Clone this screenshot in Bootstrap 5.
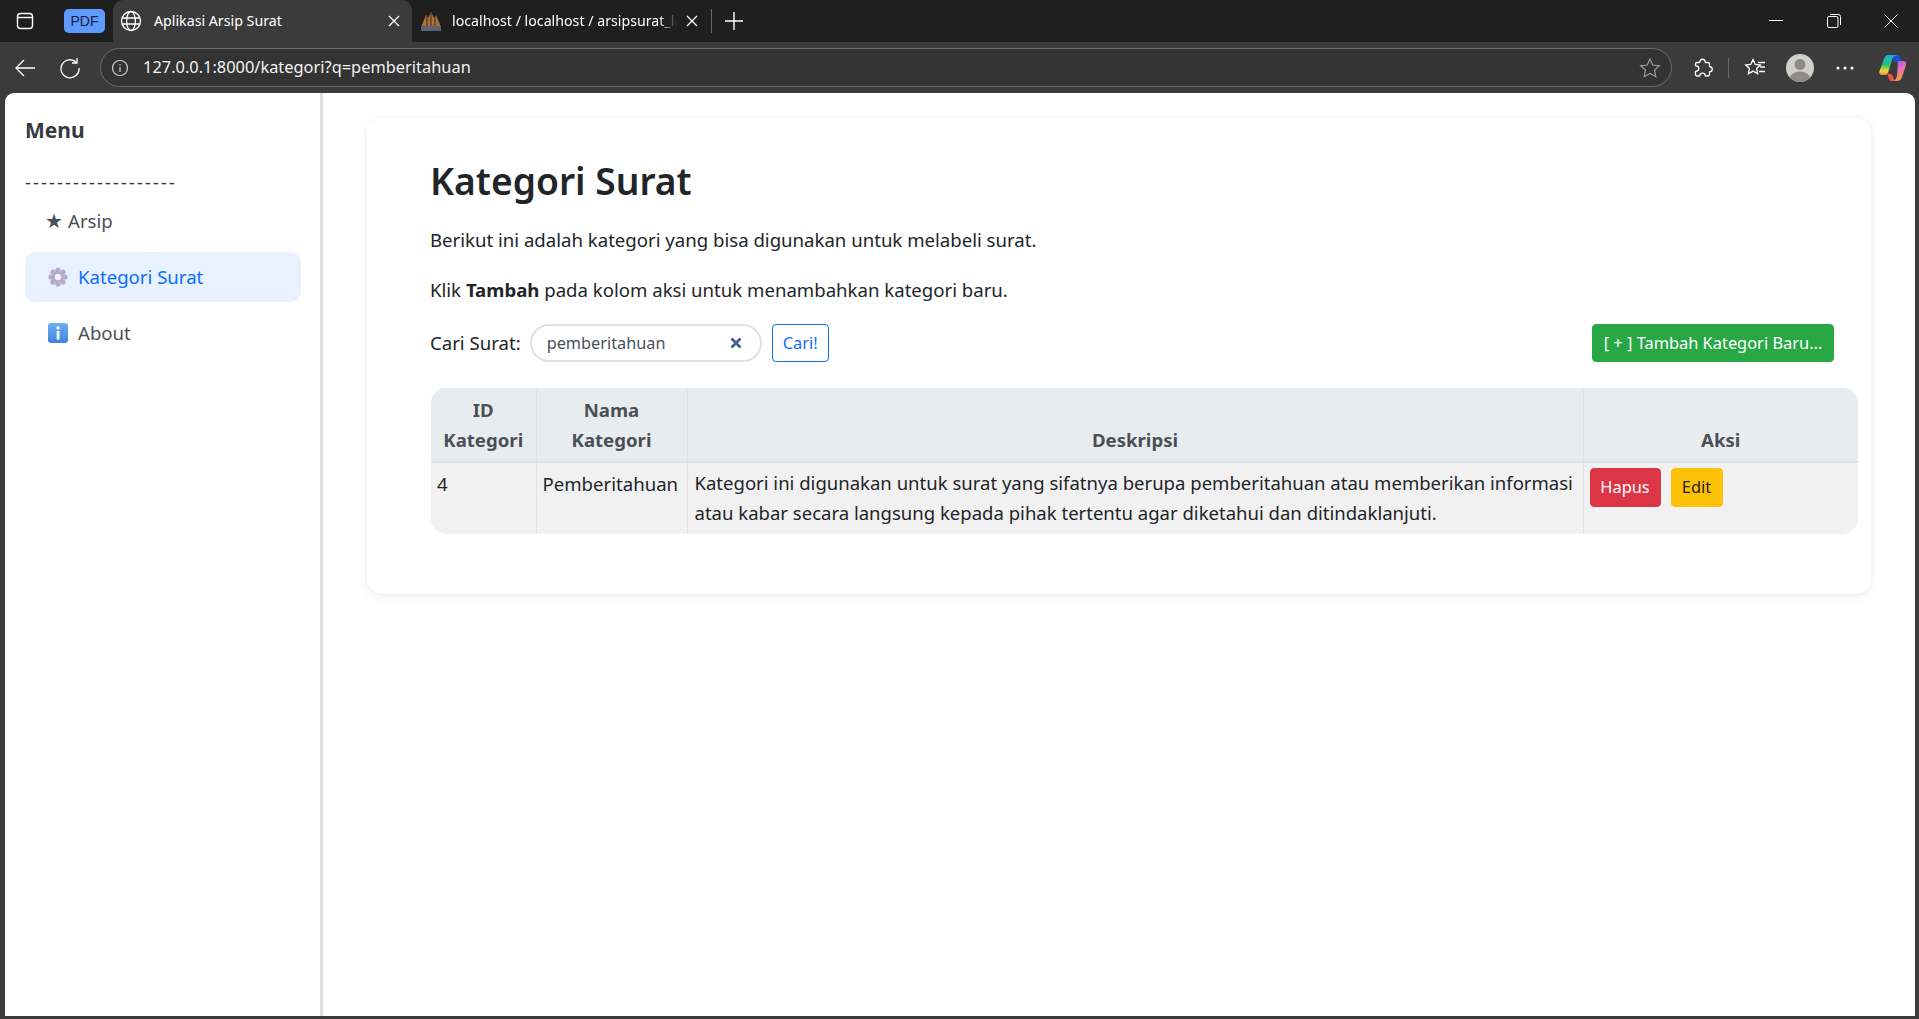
<!doctype html>
<html lang="id">
<head>
<meta charset="utf-8">
<title>Aplikasi Arsip Surat</title>
<link href="https://cdn.jsdelivr.net/npm/bootstrap@5.3.0/dist/css/bootstrap.min.css" rel="stylesheet">
<style>
html,body{height:100%;overflow:hidden}
body{background:#3b3b3b;font-family:"Noto Sans",sans-serif;font-size:18.6px;color:#212529}
.app-frame{height:1019px}
.tabstrip{height:42px;background:#1f1f1f;color:#fff;flex:none}
.toolbar{height:51px;background:#3b3b3b;color:#fff;flex:none}
.sq-btn{flex:none;display:flex;align-items:center;justify-content:center}
.side-toggle{width:24px;margin-left:13px}
.pdf-chip{width:41px;height:24px;margin:0 8px 0 27px;background:#5f9bff;color:#14233f;font-size:14px;border-radius:5px;font-family:"Liberation Sans",sans-serif}
.tab-active{width:299px;height:42px;background:#3b3b3b;border-radius:10px 10px 0 0;padding:0 11px 0 7px;font-size:14.2px}
.tab-idle{width:291px;padding:0 4px 0 8px;font-size:14.2px}
.tab-label{white-space:nowrap;overflow:hidden;flex:1 1 auto;min-width:0}
.tab-idle .tab-label{-webkit-mask-image:linear-gradient(90deg,#000 92%,transparent);padding-left:2px}
.tab-sep{width:1px;height:24px;background:#666;flex:none;margin:0 12px 0 8px}
.win-ctrl{width:58px;height:42px}
.win-last{width:56px}
.addr{height:39px;margin:0 19px 0 13px;width:1572px;flex:none;border:1px solid #6d6d6d;border-radius:20px;padding:0 10px 0 10px;background:#333;font-size:16.4px}
.addr-url{color:#f2f2f2;flex:1 1 auto;padding-left:14px}
.tool-sep{width:1px;height:20px;background:#666;flex:none;margin:0 15px 0 13px}
.viewport{background:#fff;flex:1 1 auto;margin:0 4px 3px 5px;border-radius:9px 9px 0 0;overflow:hidden;min-height:0}
.side-panel{width:318px;flex:none;border-right:3px solid #dee2e6;padding:21px 19px 0 20px}
.menu-title{font-size:21px;font-weight:700;color:#343a40;line-height:32px;margin:0}
.menu-dash{font-size:18.6px;line-height:28px;margin:22px 0 0;color:#343a40;letter-spacing:2px;white-space:nowrap}
.side-link{display:flex;align-items:center;height:50px;padding:0 0 0 20px;color:#495057;text-decoration:none;border-radius:10px;margin-bottom:6px}
.side-link.is-on{background:#e7f1ff;color:#0d6efd}
.side-star{margin-right:5px;font-size:20px}
.side-emoji{margin:0 10px 0 3px;flex:none}
.main-area{flex:1 1 auto;padding:25px 44px 0 44px;min-width:0}
.sheet{background:#fff;border-radius:15px;box-shadow:0 2px 10px rgba(0,0,0,.09);padding:39px 13px 59px 63px;height:476px}
.sheet-title{font-size:37.2px;font-weight:600;line-height:47px;margin:0 0 21px;color:#212529}
.sheet-text{line-height:30px;margin:0 0 20px}
.tools-row{height:38px;margin:-1px 24px 26px 0}
.search-pill{width:232px;height:38px;margin-left:9px;border:2px solid #dee2e6;border-radius:19px;padding:0 18px 0 15px;color:#495057;font-size:16.3px}
.btn-find{height:38px;width:57px;margin-left:10px;padding:0;font-size:16.4px;border-radius:4px;color:#0d6efd;border-color:#0d6efd}
.btn-add{height:38px;width:242px;padding:0;font-size:16.4px;border-radius:4px;background:#28a745;border-color:#28a745;white-space:nowrap}
.table-shell{border-radius:15px;overflow:hidden;width:1427px;margin-left:1px}
.data-table{table-layout:fixed;width:1427px;margin:0;border-collapse:collapse}
.data-table th{background:#e9ecef;color:#495057;font-weight:700;text-align:center;vertical-align:bottom;line-height:30px;padding:0 4px 6px;border-right:1px solid #dee2e6;border-bottom:2px solid #dee2e6;height:74px}
.data-table td{background:#f1f1f1;color:#212529;vertical-align:top;line-height:30px;padding:6px 6px 3px;border-right:1px solid #dee2e6;border-bottom:0;height:72px}
.data-table th:last-child,.data-table td:last-child{border-right:0}
.data-table td.cell-desc{padding:5px 6px 5px 7px;font-size:18.55px}
.data-table td.cell-act{padding:5px 6px}
.btn-row{height:39px;padding:0;font-size:16.4px;border-radius:4px}
.btn-del{width:71px;background:#dc3545;border-color:#dc3545;color:#fff}
.btn-edit{width:52px;margin-left:10px;background:#ffc107;border-color:#ffc107;color:#212529}
</style>
</head>
<body>
<div class="app-frame d-flex flex-column">
  <div class="tabstrip d-flex align-items-center">
    <div class="sq-btn side-toggle"><svg width="20" height="20" viewBox="0 0 20 20" fill="none" stroke="#fff" stroke-width="1.4"><rect x="2.500" y="2.500" width="15" height="15" rx="3"/><path d="M2.500 6.500h15"/></svg></div>
    <div class="sq-btn pdf-chip">PDF</div>
    <div class="tab-active d-flex align-items-center flex-none">
      <svg class="flex-shrink-0 me-2" width="22" height="22" viewBox="0 0 22 22" fill="none" stroke="#fff" stroke-width="1.3"><circle cx="11" cy="11" r="9.500"/><ellipse cx="11" cy="11" rx="4.400" ry="9.500"/><path d="M2 8h18M2 14h18"/></svg>
      <span class="tab-label ms-1">Aplikasi Arsip Surat</span>
      <svg class="flex-shrink-0" width="14" height="14" viewBox="0 0 14 14" stroke="#fff" stroke-width="1.3"><path d="M2 2l10 10M12 2L2 12"/></svg>
    </div>
    <div class="tab-idle d-flex align-items-center flex-none">
      <svg class="flex-shrink-0 me-2" width="22" height="22" viewBox="0 0 22 22"><path d="M1 17L6 5l2 3 3-6 3 6 2-3 5 12z" fill="#a87238"/><path d="M7 5v12M11 3v14M15 5v12" stroke="#3a2c1c" stroke-width="1"/><rect x="1" y="16" width="20" height="5" fill="#5b6270"/></svg>
      <span class="tab-label">localhost / localhost / arsipsurat_laravel</span>
      <svg class="flex-shrink-0 ms-2" width="14" height="14" viewBox="0 0 14 14" stroke="#fff" stroke-width="1.3"><path d="M2 2l10 10M12 2L2 12"/></svg>
    </div>
    <div class="tab-sep"></div>
    <div class="sq-btn"><svg width="20" height="20" viewBox="0 0 20 20" stroke="#fff" stroke-width="1.4"><path d="M10 1v18M1 10h18"/></svg></div>
    <div class="flex-grow-1"></div>
    <div class="sq-btn win-ctrl"><svg width="14" height="14" viewBox="0 0 14 14" stroke="#fff" stroke-width="1"><path d="M0 6.500h14"/></svg></div>
    <div class="sq-btn win-ctrl"><svg width="14" height="14" viewBox="0 0 14 14" fill="none" stroke="#fff" stroke-width="1"><rect x=".5" y="2.500" width="10.500" height="11" rx="1.500"/><path d="M3 .5h8.500a2 2 0 0 1 2 2V11"/></svg></div>
    <div class="sq-btn win-ctrl win-last"><svg width="14" height="14" viewBox="0 0 14 14" stroke="#fff" stroke-width="1"><path d="M.5.5l13 13M13.500 .5l-13 13"/></svg></div>
  </div>
  <div class="toolbar d-flex align-items-center">
    <div class="sq-btn ms-2" style="width:34px"><svg width="24" height="20" viewBox="0 0 24 20" fill="none" stroke="#fff" stroke-width="1.3"><path d="M22 10H3M11 2l-8 8 8 8"/></svg></div>
    <div class="sq-btn" style="width:34px;margin-left:11px"><svg width="22" height="22" viewBox="0 0 22 22" fill="none" stroke="#fff" stroke-width="1.3"><path d="M17.500 5.500A9 9 0 1 0 20 11"/><path d="M18 1v5h-5"/></svg></div>
    <div class="addr d-flex align-items-center">
      <svg class="flex-shrink-0" width="18" height="18" viewBox="0 0 18 18" fill="none" stroke="#d0d0d0" stroke-width="1.2"><circle cx="9" cy="9" r="7.500"/><path d="M9 8v5M9 5v1.400"/></svg>
      <span class="addr-url">127.0.0.1:8000/kategori?q=pemberitahuan</span>
      <svg class="flex-shrink-0" width="22" height="22" viewBox="0 0 22 22" fill="none" stroke="#9a9a9a" stroke-width="1.2"><path d="M11 2l2.800 6 6.500.8-4.800 4.400 1.300 6.500L11 16.400 5.200 19.700l1.300-6.500L1.700 8.800 8.200 8z"/></svg>
    </div>
    <div class="sq-btn" style="width:24px"><svg width="22" height="22" viewBox="0 0 22 22" fill="none" stroke="#fff" stroke-width="1.300"><path d="M8 4.500c0-3 5-3 5 0 0 .5.300 1 1 1h2a1.500 1.500 0 0 1 1.500 1.500v2c0 .7.500 1 1 1 2.300 0 2.300 4.500 0 4.500-.5 0-1 .3-1 1v2a1.500 1.500 0 0 1-1.500 1.500h-2c-.7 0-1-.5-1-1 0-2.600-5-2.600-5 0 0 .5-.3 1-1 1H5a1.500 1.500 0 0 1-1.500-1.500V15c0-.7.500-1 1-1 3 0 3-5 0-5-.5 0-1-.3-1-1V7A1.500 1.500 0 0 1 5 5.500h2c.7 0 1-.5 1-1z"/></svg></div>
    <div class="tool-sep"></div>
    <div class="sq-btn" style="width:22px"><svg width="22" height="22" viewBox="0 0 22 22" fill="none" stroke="#fff" stroke-width="1.300"><path d="M9 2.500l2.300 5 5 .6-3.700 3.400 1 5.200L9 14.100 4.400 16.700l1-5.200L1.700 8.100l5-.6z"/><path d="M14 5.500h7M16 10h5M15 14.500h6"/></svg></div>
    <div class="sq-btn" style="width:28px;margin-left:20px"><svg width="28" height="28" viewBox="0 0 28 28"><defs><clipPath id="av"><circle cx="14" cy="14" r="14"/></clipPath></defs><g clip-path="url(#av)"><rect width="28" height="28" fill="#d0cfca"/><circle cx="14" cy="10.500" r="5.500" fill="#8f8c87"/><ellipse cx="14" cy="25" rx="10.500" ry="7.500" fill="#8f8c87"/></g></svg></div>
    <div class="sq-btn" style="width:20px;margin-left:21px"><svg width="18" height="4" viewBox="0 0 18 4" fill="#fff"><circle cx="2" cy="2" r="1.500"/><circle cx="9" cy="2" r="1.500"/><circle cx="16" cy="2" r="1.500"/></svg></div>
    <div class="sq-btn" style="width:28px;margin-left:24px"><svg width="28" height="28" viewBox="0 0 28 28"><defs><linearGradient id="cp1" x1="0" y1="0" x2="0" y2="1"><stop offset="0" stop-color="#19a9f0"/><stop offset=".5" stop-color="#2cc36b"/><stop offset=".8" stop-color="#f6d23a"/><stop offset="1" stop-color="#f9893a"/></linearGradient><linearGradient id="cp2" x1="0" y1="0" x2=".4" y2="1"><stop offset="0" stop-color="#7d5cf0"/><stop offset=".5" stop-color="#e86ac8"/><stop offset="1" stop-color="#f79a3a"/></linearGradient></defs><path d="M14 1h4c2 0 3 1 3.500 3l1 4h-8z" fill="#1a4fd0"/><path d="M9 1H18Q14 2 13 6L9 19Q8 21 6 21H3Q-.5 21 .5 17L5 5Q6.500 1 9 1z" fill="url(#cp1)"/><path d="M8 19l2 6c.5 1.500 1.500 2 3 2h5c-2 0-3-1.500-3.500-3l-1-3z" fill="#f0543c"/><path d="M19 7h5c3 0 3.500 2 3 4l-4 12c-1 3-3 4-5 4h-5c3 0 4-2 5-5z" fill="url(#cp2)"/></svg></div>
  </div>
  <div class="viewport d-flex">
    <aside class="side-panel">
      <h5 class="menu-title">Menu</h5>
      <p class="menu-dash">-------------------</p>
      <a class="side-link" href="#"><span class="side-star">★</span>Arsip</a>
      <a class="side-link is-on" href="#"><svg class="side-emoji" width="20" height="20" viewBox="0 0 20 20"><g fill="#b7a9c9"><circle cx="10" cy="3" r="2.600"/><circle cx="10" cy="17" r="2.600"/><circle cx="3" cy="10" r="2.600"/><circle cx="17" cy="10" r="2.600"/><circle cx="5" cy="5" r="2.600"/><circle cx="15" cy="5" r="2.600"/><circle cx="5" cy="15" r="2.600"/><circle cx="15" cy="15" r="2.600"/><circle cx="10" cy="10" r="6"/></g><circle cx="10" cy="10" r="3.300" fill="#f1eef2"/></svg>Kategori Surat</a>
      <a class="side-link" href="#"><svg class="side-emoji" width="20" height="20" viewBox="0 0 20 20"><defs><linearGradient id="inf" x1="0" y1="0" x2="0" y2="1"><stop offset="0" stop-color="#6bb0f2"/><stop offset="1" stop-color="#3f83dc"/></linearGradient></defs><rect width="20" height="20" rx="3" fill="url(#inf)"/><rect x="8.700" y="8" width="2.800" height="8.500" fill="#fff"/><circle cx="10" cy="5" r="1.700" fill="#fff"/></svg>About</a>
    </aside>
    <main class="main-area">
      <div class="sheet">
        <h2 class="sheet-title">Kategori Surat</h2>
        <p class="sheet-text">Berikut ini adalah kategori yang bisa digunakan untuk melabeli surat.</p>
        <p class="sheet-text">Klik <strong>Tambah</strong> pada kolom aksi untuk menambahkan kategori baru.</p>
        <div class="tools-row d-flex align-items-center">
          <span>Cari Surat:</span>
          <div class="search-pill d-flex align-items-center justify-content-between">
            <span>pemberitahuan</span>
            <svg width="12" height="12" viewBox="0 0 12 12" stroke="#3b5a8f" stroke-width="2.600"><path d="M1.500 1.500l9 9M10.500 1.500l-9 9"/></svg>
          </div>
          <button class="btn btn-outline-primary btn-find" type="button">Cari!</button>
          <button class="btn btn-success btn-add ms-auto" type="button">[ + ] Tambah Kategori Baru...</button>
        </div>
        <div class="table-shell">
          <table class="table data-table">
            <colgroup><col style="width:105px"><col style="width:151px"><col style="width:896px"><col style="width:275px"></colgroup>
            <thead><tr><th>ID<br>Kategori</th><th>Nama<br>Kategori</th><th>Deskripsi</th><th>Aksi</th></tr></thead>
            <tbody><tr>
              <td>4</td>
              <td class="text-nowrap">Pemberitahuan</td>
              <td class="cell-desc">Kategori ini digunakan untuk surat yang sifatnya berupa pemberitahuan atau memberikan informasi atau kabar secara langsung kepada pihak tertentu agar diketahui dan ditindaklanjuti.</td>
              <td class="cell-act"><button class="btn btn-danger btn-row btn-del" type="button">Hapus</button><button class="btn btn-warning btn-row btn-edit" type="button">Edit</button></td>
            </tr></tbody>
          </table>
        </div>
      </div>
    </main>
  </div>
</div>
</body>
</html>
